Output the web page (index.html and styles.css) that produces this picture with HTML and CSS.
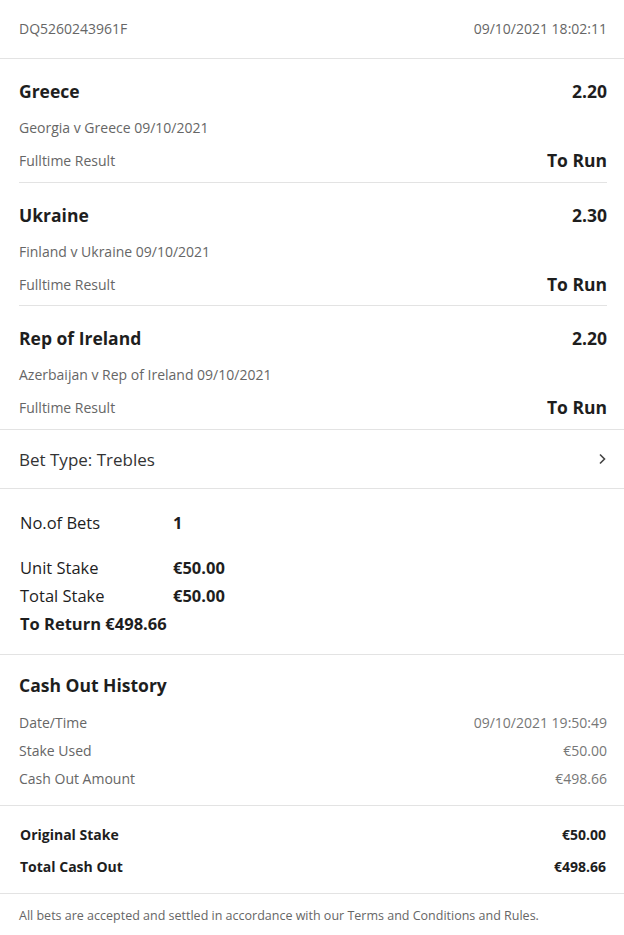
FILE: index.html
```html
<!DOCTYPE html>
<html lang="en">
  <head>
    <title>Bet Receipt</title>
    <meta charset="UTF-8" />
    <meta name="viewport" content="width=device-width, initial-scale=1.0" />
    <link rel="stylesheet" href="styles.css">
  </head>

  <body>
    <div class="receipt">
      <!-- Bet reference + placed time -->
      <div class="receipt-header">
        <span>DQ5260243961F</span>
        <span>09/10/2021 18:02:11</span>
      </div>

      <div class="selections">
        <div class="selection">
          <div class="selection-row">
            <span class="selection-name">Greece</span>
            <span class="selection-odds">2.20</span>
          </div>
          <div class="selection-event">Georgia v Greece 09/10/2021</div>
          <div class="selection-row">
            <span class="selection-market">Fulltime Result</span>
            <span class="selection-status">To Run</span>
          </div>
        </div>

        <div class="selection">
          <div class="selection-row">
            <span class="selection-name">Ukraine</span>
            <span class="selection-odds">2.30</span>
          </div>
          <div class="selection-event">Finland v Ukraine 09/10/2021</div>
          <div class="selection-row">
            <span class="selection-market">Fulltime Result</span>
            <span class="selection-status">To Run</span>
          </div>
        </div>

        <div class="selection">
          <div class="selection-row">
            <span class="selection-name">Rep of Ireland</span>
            <span class="selection-odds">2.20</span>
          </div>
          <div class="selection-event">Azerbaijan v Rep of Ireland 09/10/2021</div>
          <div class="selection-row">
            <span class="selection-market">Fulltime Result</span>
            <span class="selection-status">To Run</span>
          </div>
        </div>
      </div>

      <div class="bet-type">
        <span>Bet Type: Trebles</span>
        <svg class="chevron" width="8" height="12" viewBox="0 0 8 12" aria-hidden="true">
          <path d="M2 1.5 L6.5 6 L2 10.5" fill="none" stroke="#444" stroke-width="1.6" />
        </svg>
      </div>

      <div class="stakes">
        <div class="stake-row stake-count">
          <span class="stake-label">No.of Bets</span>
          <span class="stake-value">1</span>
        </div>
        <div class="stake-row">
          <span class="stake-label">Unit Stake</span>
          <span class="stake-value">€50.00</span>
        </div>
        <div class="stake-row">
          <span class="stake-label">Total Stake</span>
          <span class="stake-value">€50.00</span>
        </div>
        <div class="stake-row stake-return">To Return €498.66</div>
      </div>

      <div class="cashout">
        <h2 class="cashout-title">Cash Out History</h2>
        <div class="cashout-row">
          <span>Date/Time</span>
          <span class="cashout-value">09/10/2021 19:50:49</span>
        </div>
        <div class="cashout-row">
          <span>Stake Used</span>
          <span class="cashout-value">€50.00</span>
        </div>
        <div class="cashout-row">
          <span>Cash Out Amount</span>
          <span class="cashout-value">€498.66</span>
        </div>
      </div>

      <div class="totals">
        <div class="totals-row">
          <span>Original Stake</span>
          <span>€50.00</span>
        </div>
        <div class="totals-row">
          <span>Total Cash Out</span>
          <span>€498.66</span>
        </div>
      </div>

      <p class="terms">All bets are accepted and settled in accordance with our Terms and Conditions and Rules.</p>
    </div>
  </body>
</html>
```

FILE: styles.css
```css
:root {
  --color-bg: #ffffff;
  --color-text: #1e1e1e;
  --color-muted: #666666;
  --color-light: #777777;
  --color-border: #e3e3e3;
}

* {
  box-sizing: border-box;
}

body {
  margin: 0;
  font-family: "Open Sans", "Noto Sans", Arial, sans-serif;
  background-color: var(--color-bg);
  color: var(--color-text);
}

.receipt {
  width: 100%;
}

.receipt-header {
  display: flex;
  justify-content: space-between;
  align-items: center;
  height: 59px;
  padding: 0 17px 2px 19px;
  border-bottom: 1px solid var(--color-border);
  font-size: 14px;
  color: var(--color-muted);
}

/* Each leg of the treble */
.selections {
  padding: 0 17px 0 19px;
  border-bottom: 1px solid var(--color-border);
}

.selection {
  padding: 20px 0 10px;
  border-bottom: 1px solid var(--color-border);
}

.selection:nth-child(2) {
  padding-bottom: 9px;
}

.selection:last-child {
  border-bottom: none;
}

.selection-row {
  display: flex;
  justify-content: space-between;
  align-items: center;
  height: 24px;
}

.selection-name,
.selection-odds,
.selection-status {
  font-size: 17.5px;
  font-weight: 700;
}

.selection-event {
  height: 20px;
  line-height: 20px;
  margin: 15px 0 10px;
  font-size: 14px;
  color: var(--color-muted);
}

.selection-market {
  font-size: 14px;
  color: var(--color-muted);
}

.bet-type {
  display: flex;
  justify-content: space-between;
  align-items: center;
  height: 59px;
  padding: 0 18px 0 19px;
  border-bottom: 1px solid var(--color-border);
  font-size: 17px;
  color: #333333;
}

.stakes {
  padding: 21px 19px 17px 20px;
  border-bottom: 1px solid var(--color-border);
}

.stake-row {
  display: flex;
  align-items: center;
  height: 28px;
  font-size: 16.5px;
}

.stake-count {
  height: 24px;
  margin-bottom: 19px;
}

.stake-label {
  width: 153px;
}

.stake-value,
.stake-return {
  font-weight: 700;
}

.cashout {
  padding: 18px 17px 13px 19px;
  border-bottom: 1px solid var(--color-border);
}

.cashout-title {
  margin: 0 0 11px;
  height: 24px;
  line-height: 24px;
  font-size: 17.5px;
  font-weight: 700;
}

.cashout-row {
  display: flex;
  justify-content: space-between;
  align-items: center;
  height: 28px;
  font-size: 14px;
  color: var(--color-muted);
}

.cashout-value {
  color: var(--color-light);
}

.totals {
  padding: 12px 18px 11px 20px;
  border-bottom: 1px solid var(--color-border);
}

.totals-row {
  display: flex;
  justify-content: space-between;
  align-items: center;
  height: 32px;
  font-size: 14px;
  font-weight: 700;
}

.terms {
  margin: 0;
  padding: 12px 19px;
  line-height: 20px;
  font-size: 12.5px;
  color: var(--color-muted);
}
```
